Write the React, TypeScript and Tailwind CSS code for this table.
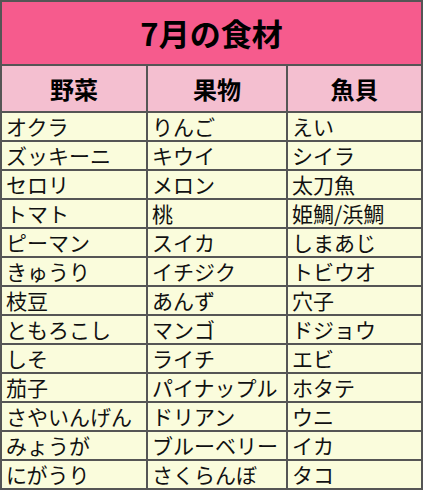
import React from "react";

const rows: [string, string, string][] = [
  ["オクラ", "りんご", "えい"],
  ["ズッキーニ", "キウイ", "シイラ"],
  ["セロリ", "メロン", "太刀魚"],
  ["トマト", "桃", "姫鯛/浜鯛"],
  ["ピーマン", "スイカ", "しまあじ"],
  ["きゅうり", "イチジク", "トビウオ"],
  ["枝豆", "あんず", "穴子"],
  ["ともろこし", "マンゴ", "ドジョウ"],
  ["しそ", "ライチ", "エビ"],
  ["茄子", "パイナップル", "ホタテ"],
  ["さやいんげん", "ドリアン", "ウニ"],
  ["みょうが", "ブルーベリー", "イカ"],
  ["にがうり", "さくらんぼ", "タコ"],
];

export default function App() {
  return (
    <div
      className="w-[423px] h-[490px] bg-[#555555] p-[2px] grid grid-cols-[144px_138px_133px] gap-[2px] grid-rows-[62px_45px_repeat(13,27px)] text-[#111]"
      style={{ fontFamily: '"Noto Sans CJK JP", "Noto Sans", sans-serif' }}
    >
      <div className="col-span-3 bg-[#f65b8d] flex items-center justify-center text-[31px] font-bold leading-[40px] text-black">
        7月の食材
      </div>
      {["野菜", "果物", "魚貝"].map((h) => (
        <div
          key={h}
          className="bg-[#f4bfd0] flex items-center justify-center text-[24px] font-bold leading-[32px] text-black"
        >
          {h}
        </div>
      ))}
      {rows.map((r, i) =>
        r.map((c, j) => (
          <div
            key={`${i}-${j}`}
            className="bg-[#fafcdc] pl-[4px] text-[21px] leading-[27px] whitespace-nowrap"
          >
            {c}
          </div>
        ))
      )}
    </div>
  );
}
